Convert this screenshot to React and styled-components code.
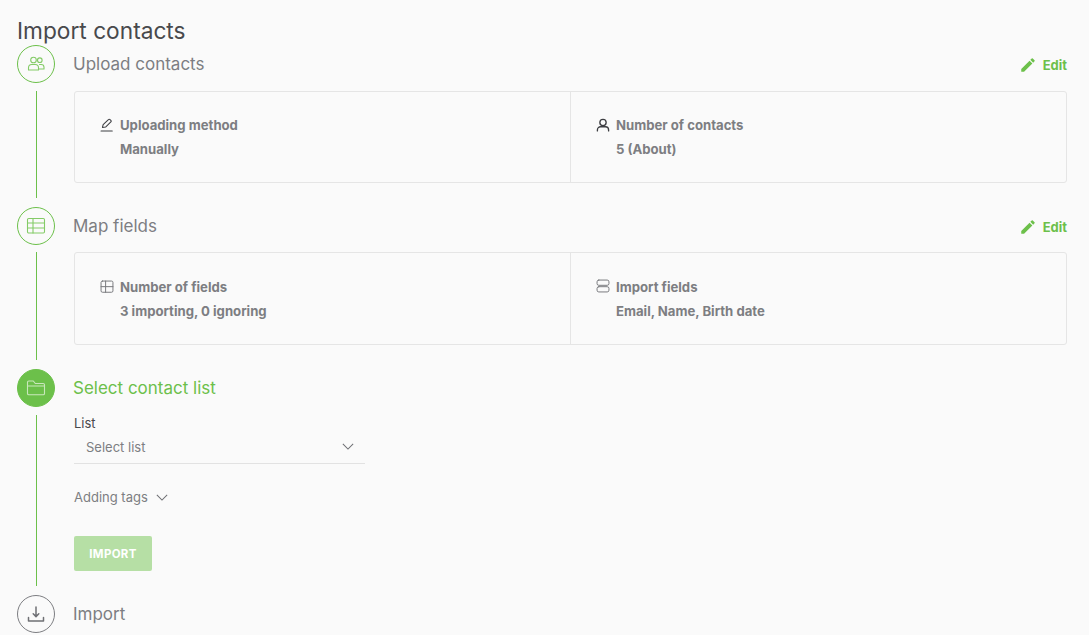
import React from "react";
import styled, { createGlobalStyle } from "styled-components";

const Global = createGlobalStyle`
  html, body { margin: 0; padding: 0; background: #fafafa; }
  body { font-family: Inter, "Liberation Sans", sans-serif; overflow: hidden; }
`;
const Page = styled.div`
  width: 1089px; height: 635px; box-sizing: border-box; padding: 16px 22px 0 17px; overflow: hidden;
`;
const Title = styled.h1`
  margin: 0; font-size: 22.7px; line-height: 29px; font-weight: 400; color: #48494c;
`;
const Step = styled.section`
  display: flex; gap: 19px; height: ${p => p.$h}px;
`;
const Rail = styled.div`
  width: 38px; flex: none; display: flex; flex-direction: column; align-items: center;
`;
const Circle = styled.div`
  width: 38px; height: 38px; flex: none; box-sizing: border-box; border-radius: 50%;
  display: flex; align-items: center; justify-content: center;
  border: 1px solid ${p => p.$c}; color: ${p => p.$ic};
  background: ${p => (p.$fill ? p.$c : "transparent")};
`;
const Line = styled.div`
  width: 1px; flex: 1; background: #6cc04a; margin: ${p => p.$m};
`;
const Body = styled.div`
  flex: 1; min-width: 0;
`;
const Head = styled.div`
  height: 38px; display: flex; align-items: center; justify-content: space-between;
`;
const StepName = styled.h2`
  margin: 0 0 0 -1px; font-size: 17px; font-weight: 400; color: ${p => p.$c || "#7d7e82"};
`;
const EditLink = styled.a`
  display: flex; align-items: center; gap: 6px; margin-top: ${p => p.$mt}px;
  font-size: 13px; font-weight: 700; color: #6cc04a;
`;
const Card = styled.div`
  height: ${p => p.$h}px; margin-top: ${p => p.$mt}px; box-sizing: border-box; border: 1px solid #e5e5e5; border-radius: 3px;
  display: grid; grid-template-columns: 495px 1fr;
`;
const Cell = styled.div`
  display: flex; gap: 5px; padding: ${p => p.$pt}px 0 0 25px;
  & + & { border-left: 1px solid #e5e5e5; }
`;
const Ico = styled.span`
  width: 15px; height: 15px; flex: none; display: block; margin-top: ${p => p.$mt}px; color: ${p => p.$c || "#77787c"};
  svg { display: block; }
`;
const CellText = styled.div`
  font-size: 13.15px; font-weight: 700; line-height: 24px; color: #7d7e82; margin-top: -2px;
`;
const Label = styled.div`
  font-size: 13px; color: #48494c; line-height: 16px; margin: 8px 0 0;
`;
const SelectBox = styled.div`
  width: 291px; height: 33px; box-sizing: border-box; border-bottom: 1px solid #e2e2e2;
  display: flex; align-items: center; justify-content: space-between;
  padding: 0 11px 1px 12px; font-size: 13px; color: #7d7e82;
`;
const Tags = styled.div`
  display: flex; align-items: center; gap: 8px; margin: 24px 0 0; font-size: 13px; line-height: 18px; color: #7d7e82;
`;
const ImportBtn = styled.button`
  display: block; width: 78px; height: 35px; margin-top: 30px; border: 0; border-radius: 2px; padding: 0;
  background: #b6dfa5; color: #fff; font: 700 11.5px Inter, sans-serif; letter-spacing: 0.3px;
`;

const S = ({ children, size = 20, w = 1.3 }) => (
  <svg width={size} height={size} viewBox="0 0 20 20" fill="none" stroke="currentColor" strokeWidth={w} strokeLinecap="round" strokeLinejoin="round">{children}</svg>
);
const Chevron = () => (
  <svg width="12" height="7" viewBox="0 0 14 8" fill="none" stroke="#6f7074" strokeWidth="1.2"><path d="M1 1l6 6 6-6" /></svg>
);
const Pencil = () => (
  <svg width="18" height="18" viewBox="0 0 24 24" fill="#6cc04a"><path d="M3 17.25V21h3.75L17.81 9.94l-3.75-3.75L3 17.25zM20.71 7.04a1 1 0 0 0 0-1.41l-2.34-2.34a1 1 0 0 0-1.41 0l-1.83 1.83 3.75 3.75 1.83-1.83z" /></svg>
);
const Edit = ({ mt }) => <EditLink $mt={mt}><Pencil />Edit</EditLink>;

export default function App() {
  return (
    <Page>
      <Global />
      <Title>Import contacts</Title>
      <Step $h={162}>
        <Rail>
          <Circle $c="#6cc04a" $ic="#84cb67">
            <S size={20} w={1.1}>
              <circle cx="7.5" cy="6" r="2.8" /><circle cx="13.8" cy="6.2" r="2.3" />
              <path d="M2.5 16v-2.2c0-1.8 1.5-3.3 3.3-3.3h3.4c1.8 0 3.3 1.5 3.3 3.3V16z" />
              <path d="M13.5 10.5h1.7c1.5 0 2.8 1.2 2.8 2.8V15h-5.5" />
            </S>
          </Circle>
          <Line $m="8px 0 9px" />
        </Rail>
        <Body>
          <Head><StepName>Upload contacts</StepName><Edit mt={1} /></Head>
          <Card $mt={8} $h={92}>
            <Cell $pt={23}>
              <Ico $mt={3} $c="#3d3e42"><S size={14} w={1.5}><path d="M3.5 13.5l1-4L12 2.2a1.6 1.6 0 0 1 2.3 0l1.2 1.2a1.6 1.6 0 0 1 0 2.3L8 13l-4.5.5zM1.5 18.5h16" /></S></Ico>
              <CellText>Uploading method<br />Manually</CellText>
            </Cell>
            <Cell $pt={23}>
              <Ico $mt={3} $c="#3d3e42"><S size={14} w={1.9}><circle cx="10" cy="6.5" r="4.5" /><path d="M2 18.5V17c0-2.7 2-4.5 4.5-4.5h7c2.5 0 4.5 1.8 4.5 4.5v1.5" /></S></Ico>
              <CellText>Number of contacts<br />5 (About)</CellText>
            </Cell>
          </Card>
        </Body>
      </Step>
      <Step $h={162}>
        <Rail>
          <Circle $c="#6cc04a" $ic="#84cb67">
            <S size={20} w={1.1}>
              <rect x="1.5" y="2.5" width="17" height="14.5" rx="1.2" /><path d="M1.5 7h17M1.5 12h17M7 2.5v14.5" />
            </S>
          </Circle>
          <Line $m="7px 0 9px" />
        </Rail>
        <Body>
          <Head><StepName>Map fields</StepName><Edit mt={2} /></Head>
          <Card $mt={7} $h={93}>
            <Cell $pt={24}>
              <Ico $mt={3}><S size={14} w={1.4}><rect x="1.5" y="1.5" width="17" height="16" rx="2" /><path d="M1.5 9.5h17M8 1.5v16" /></S></Ico>
              <CellText>Number of fields<br />3 importing, 0 ignoring</CellText>
            </Cell>
            <Cell $pt={24}>
              <Ico $mt={2}><S size={14} w={1.4}><rect x="1.5" y="1.5" width="17" height="7.5" rx="2.5" /><rect x="1.5" y="11" width="17" height="7.5" rx="2.5" /></S></Ico>
              <CellText>Import fields<br />Email, Name, Birth date</CellText>
            </Cell>
          </Card>
        </Body>
      </Step>
      <Step $h={226}>
        <Rail>
          <Circle $c="#6cc04a" $ic="#c9e7bc" $fill>
            <S size={20} w={1.1}>
              <path d="M1.5 15.5V4.3C1.5 3.6 2.1 3 2.8 3h4.5l2 2.5h7.9c.7 0 1.3.6 1.3 1.3v8.7c0 .7-.6 1.3-1.3 1.3H2.8c-.7 0-1.3-.6-1.3-1.3zM1.5 8h17" />
            </S>
          </Circle>
          <Line $m="8px 0 9px" />
        </Rail>
        <Body>
          <Head><StepName $c="#6cc04a">Select contact list</StepName></Head>
          <Label>List</Label>
          <SelectBox>Select list<Chevron /></SelectBox>
          <Tags>Adding tags<Chevron /></Tags>
          <ImportBtn>IMPORT</ImportBtn>
        </Body>
      </Step>
      <Step $h={40}>
        <Rail>
          <Circle $c="#7d7e82" $ic="#6f7074">
            <S size={20} w={1.5}><path d="M10 3v9.5M7.2 9.800L10 12.6l2.800-2.800M2.500 13.500V17h15v-3.500" /></S>
          </Circle>
        </Rail>
        <Body>
          <Head><StepName>Import</StepName></Head>
        </Body>
      </Step>
    </Page>
  );
}
